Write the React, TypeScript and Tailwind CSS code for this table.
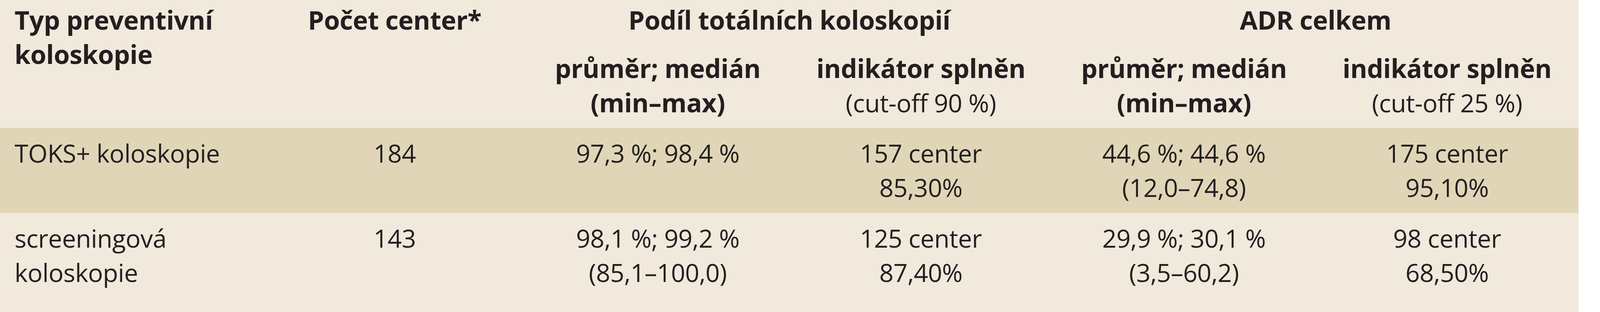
const font = { fontFamily: '"Open Sans", "Noto Sans", sans-serif' };

interface BodyRow {
  type: React.ReactNode;
  count: string;
  cells: React.ReactNode[];
  shaded?: boolean;
}

const rows: BodyRow[] = [
  {
    type: "TOKS+ koloskopie",
    count: "184",
    cells: [
      "97,3 %; 98,4 %",
      <>157 center<br />85,30%</>,
      <>44,6 %; 44,6 %<br />(12,0–74,8)</>,
      <>175 center<br />95,10%</>,
    ],
    shaded: true,
  },
  {
    type: <>screeningová<br />koloskopie</>,
    count: "143",
    cells: [
      <>98,1 %; 99,2 %<br />(85,1–100,0)</>,
      <>125 center<br />87,40%</>,
      <>29,9 %; 30,1 %<br />(3,5–60,2)</>,
      <>98 center<br />68,50%</>,
    ],
  },
];

export default function App() {
  return (
    <div className="w-full h-[800px] bg-white overflow-hidden" style={font}>
      {/* widths follow the viewport so the table keeps its proportions */}
      <div className="w-[98.667%] h-[800px] bg-[#f0e9dc] text-[#231f20] tracking-[-0.03em]">
        {/* Header */}
        <div className="grid grid-cols-6 gap-y-[36px] pt-[7px] pb-[20px] text-[1.61vw] leading-[88px] font-bold">
          <div className="row-span-2 pl-[0.911vw]">
            Typ preventivní
            <br />
            koloskopie
          </div>
          <div className="row-span-2 text-center">Počet center*</div>
          <div className="col-span-2 text-center">Podíl totálních koloskopií</div>
          <div className="col-span-2 text-center">ADR celkem</div>
          <div className="text-center">
            průměr; medián
            <br />
            (min–max)
          </div>
          <div className="text-center">
            indikátor splněn
            <br />
            <span className="font-normal text-[1.5625vw]">(cut-off 90 %)</span>
          </div>
          <div className="text-center">
            průměr; medián
            <br />
            (min–max)
          </div>
          <div className="text-center">
            indikátor splněn
            <br />
            <span className="font-normal text-[1.5625vw]">(cut-off 25 %)</span>
          </div>
        </div>

        {/* Body */}
        {rows.map((row, i) => (
          <div
            key={i}
            className={
              row.shaded
                ? "grid grid-cols-6 py-[21px] text-[1.5625vw] leading-[88px] bg-[#e0d6b7]"
                : "grid grid-cols-6 py-[21px] text-[1.5625vw] leading-[88px]"
            }
          >
            <div className="pl-[0.911vw]">{row.type}</div>
            <div className="text-center">{row.count}</div>
            {row.cells.map((c, j) => (
              <div key={j} className="text-center">
                {c}
              </div>
            ))}
          </div>
        ))}
      </div>
    </div>
  );
}
